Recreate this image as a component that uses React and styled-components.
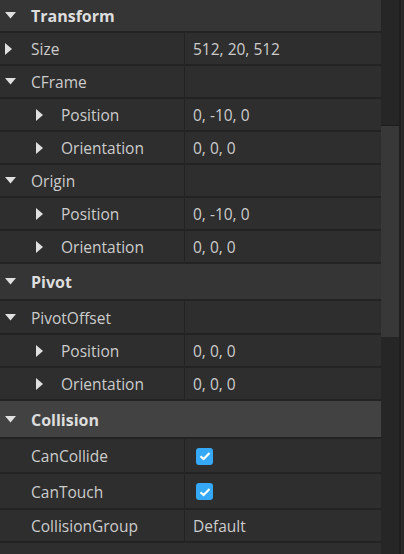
import React from 'react';
import styled, { createGlobalStyle } from 'styled-components';

const GlobalStyle = createGlobalStyle`
    html, body {
        margin: 0;
        padding: 0;
        background: #2e2e2e;
    }
    body {
        font-family: "Open Sans", "Noto Sans", sans-serif;
    }
`;

const Window = styled.div`
    width: 404px;
    height: 554px;
    display: flex;
    overflow: hidden;
    background: #2e2e2e;
`;

const Panel = styled.div`
    width: 381px;
    display: flex;
    flex-direction: column;
`;

const SectionHeader = styled.div`
    height: ${(p) => p.$h}px;
    display: flex;
    align-items: center;
    background: ${(p) => (p.$hover ? '#424242' : '#353535')};
    border-bottom: 2px solid #232323;
    color: #dddddd;
    font-weight: 700;
    font-size: 16px;
`;

const Row = styled.div`
    height: ${(p) => p.$h}px;
    display: flex;
    background: #2e2e2e;
    border-bottom: 2px solid #232323;
    color: #cccccc;
    font-size: 15.5px;
`;

const NameCell = styled.div`
    width: 185px;
    flex-shrink: 0;
    display: flex;
    align-items: center;
    border-right: ${(p) => (p.$plain ? 'none' : '1px solid #232323')};
    padding-left: ${(p) => (p.$nested ? 36 : 5)}px;
    box-sizing: border-box;
`;

const ValueCell = styled.div`
    flex: 1;
    display: flex;
    align-items: center;
    padding-left: 8px;
    padding-top: 1px;
`;

const ArrowSlot = styled.span`
    width: ${(p) => (p.$nested ? 25 : 26)}px;
    display: flex;
    align-items: center;
    flex-shrink: 0;
`;

const Label = styled.span`
    white-space: nowrap;
    padding-top: 1px;
`;

const Check = styled.span`
    width: 17px;
    height: 17px;
    margin-left: 3px;
    border-radius: 3px;
    background: #35a8f7;
    display: flex;
    align-items: center;
    justify-content: center;
`;

const Scrollbar = styled.div`
    width: 23px;
    display: flex;
`;

const Track = styled.div`
    width: 18px;
    background: #262626;
    display: flex;
    flex-direction: column;
`;

const Gutter = styled.div`
    height: 125px;
    border-bottom: 1px solid #1d1d1d;
`;

const Thumb = styled.div`
    height: 211px;
    background: #383838;
`;

const Edge = styled.div`
    width: 2px;
    background: #1f1f1f;
`;

const Rest = styled.div`
    flex: 1;
    background: #2a2a2a;
`;

const Arrow = ({ open }) =>
    open ? (
        <svg width="11" height="7" viewBox="0 0 11 7">
            <path d="M0 0 H11 L5.5 6.5 Z" fill="#e0e0e0" />
        </svg>
    ) : (
        <svg width="7" height="12" viewBox="0 0 7 12">
            <path d="M0 0 L7 6 L0 12 Z" fill="#e0e0e0" />
        </svg>
    );

const CheckBox = () => (
    <Check>
        <svg width="12" height="10" viewBox="0 0 12 10">
            <path d="M1.5 5.2 L4.6 8 L10.5 2" stroke="#fff" strokeWidth="2.2" fill="none" />
        </svg>
    </Check>
);

const Section = ({ title, h = 31, hover }) => (
    <SectionHeader $h={h} $hover={hover}>
        <NameCell $plain>
            <ArrowSlot>
                <Arrow open />
            </ArrowSlot>
            <Label>{title}</Label>
        </NameCell>
    </SectionHeader>
);

const Prop = ({ name, value, arrow, nested, h = 31 }) => (
    <Row $h={h}>
        <NameCell $nested={nested}>
            <ArrowSlot $nested={nested}>{arrow && <Arrow open={arrow === 'open'} />}</ArrowSlot>
            <Label>{name}</Label>
        </NameCell>
        <ValueCell>{value === true ? <CheckBox /> : value}</ValueCell>
    </Row>
);

export default function App() {
    return (
        <Window>
            <GlobalStyle />
            <Panel>
                <Section title="Transform" />
                <Prop name="Size" value="512, 20, 512" arrow="closed" />
                <Prop name="CFrame" arrow="open" />
                <Prop name="Position" value="0, -10, 0" arrow="closed" nested />
                <Prop name="Orientation" value="0, 0, 0" arrow="closed" nested />
                <Prop name="Origin" arrow="open" />
                <Prop name="Position" value="0, -10, 0" arrow="closed" nested />
                <Prop name="Orientation" value="0, 0, 0" arrow="closed" nested />
                <Section title="Pivot" h={35} />
                <Prop name="PivotOffset" arrow="open" h={32} />
                <Prop name="Position" value="0, 0, 0" arrow="closed" nested h={31} />
                <Prop name="Orientation" value="0, 0, 0" arrow="closed" nested h={31} />
                <Section title="Collision" h={36} hover />
                <Prop name="CanCollide" value h={33} />
                <Prop name="CanTouch" value h={34} />
                <Prop name="CollisionGroup" value="Default" h={31} />
            </Panel>
            <Scrollbar>
                <Track>
                    <Gutter />
                    <Thumb />
                </Track>
                <Edge />
                <Rest />
            </Scrollbar>
        </Window>
    );
}
